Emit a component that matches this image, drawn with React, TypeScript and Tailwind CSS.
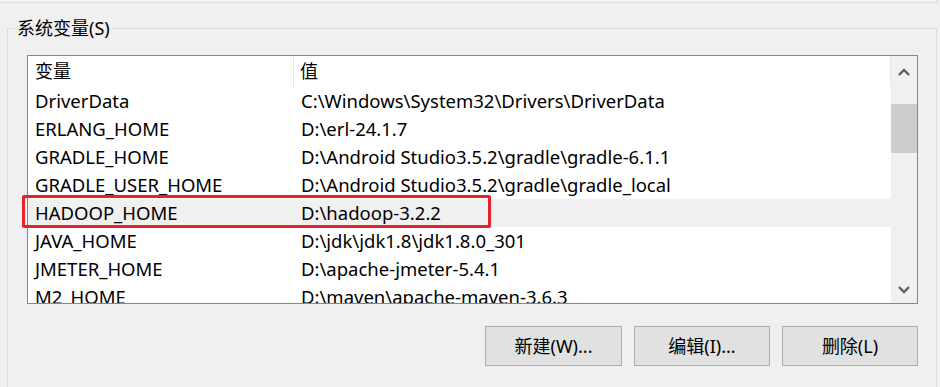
import React from "react";

const rows: [string, string][] = [
  ["DriverData", "C:\\Windows\\System32\\Drivers\\DriverData"],
  ["ERLANG_HOME", "D:\\erl-24.1.7"],
  ["GRADLE_HOME", "D:\\Android Studio3.5.2\\gradle\\gradle-6.1.1"],
  ["GRADLE_USER_HOME", "D:\\Android Studio3.5.2\\gradle\\gradle_local"],
  ["HADOOP_HOME", "D:\\hadoop-3.2.2"],
  ["JAVA_HOME", "D:\\jdk\\jdk1.8\\jdk1.8.0_301"],
  ["JMETER_HOME", "D:\\apache-jmeter-5.4.1"],
  ["M2_HOME", "D:\\maven\\apache-maven-3.6.3"],
];

const font = {
  fontFamily: '"Segoe UI", "Noto Sans", "Noto Sans CJK SC", sans-serif',
};

function Chevron({ up }: { up?: boolean }) {
  return (
    <svg width="12" height="8" viewBox="0 0 12 8">
      <path
        d={up ? "M1 7 L6 2 L11 7" : "M1 1 L6 6 L11 1"}
        fill="none"
        stroke="#606060"
        strokeWidth="2.4"
      />
    </svg>
  );
}

export default function App() {
  return (
    <div
      className="relative w-[940px] h-[387px] overflow-hidden bg-[#f0f0f0] text-black"
      style={font}
    >
      <div className="h-[3px] w-[937px] border-b border-r border-[#dcdcdc]" />
      <div className="relative ml-[7px] mt-[25px] w-[930px] h-[400px] border border-[#dcdcdc] pl-[19px] pt-[26px]">
        <div className="absolute left-[7px] top-[-14px] px-[2px] bg-[#f0f0f0] text-[18px] leading-[26px]">
          系统变量(S)
        </div>
        <div className="flex w-[891px] h-[249px] border border-[#828790] bg-white">
          <div className="flex flex-col flex-1 overflow-hidden">
            <div className="flex h-[31px] shrink-0 text-[18px] items-center">
              <div className="w-[266px] h-full pl-[7px] flex items-center border-r border-[#e5e5e5]">
                变量
              </div>
              <div className="flex-1 h-full pl-[6px] flex items-center border-r border-[#e5e5e5]">
                值
              </div>
            </div>
            {rows.map(([k, v]) => (
              <div
                key={k}
                className={
                  "flex h-[28px] shrink-0 items-center text-[18.5px] " +
                  (k === "HADOOP_HOME" ? "bg-[#f0f0f0]" : "")
                }
              >
                <div className="w-[266px] pl-[7px] whitespace-nowrap">{k}</div>
                <div className="flex-1 pl-[7px] whitespace-nowrap">{v}</div>
              </div>
            ))}
          </div>
          <div className="w-[26px] shrink-0 bg-[#f0f0f0] flex flex-col">
            <div className="h-[32px] flex items-center justify-center">
              <Chevron up />
            </div>
            <div className="mt-[16px] h-[49px] bg-[#cdcdcd]" />
            <div className="flex-1" />
            <div className="h-[26px] flex items-center justify-center">
              <Chevron />
            </div>
          </div>
        </div>
        <div className="flex w-[891px] justify-end gap-[12px] mt-[22px]">
          <button className="w-[137px] h-[40px] border border-[#adadad] bg-[#e1e1e1] text-[18px]">
            新建(W)...
          </button>
          <button className="w-[136px] h-[40px] border border-[#adadad] bg-[#e1e1e1] text-[18px]">
            编辑(I)...
          </button>
          <button className="w-[136px] h-[40px] border border-[#adadad] bg-[#e1e1e1] text-[18px]">
            删除(L)
          </button>
        </div>
      </div>
      <div className="absolute left-[22px] top-[195px] w-[469px] h-[33px] border-[3px] border-[#e8212b] rounded-[2px]" />
    </div>
  );
}
